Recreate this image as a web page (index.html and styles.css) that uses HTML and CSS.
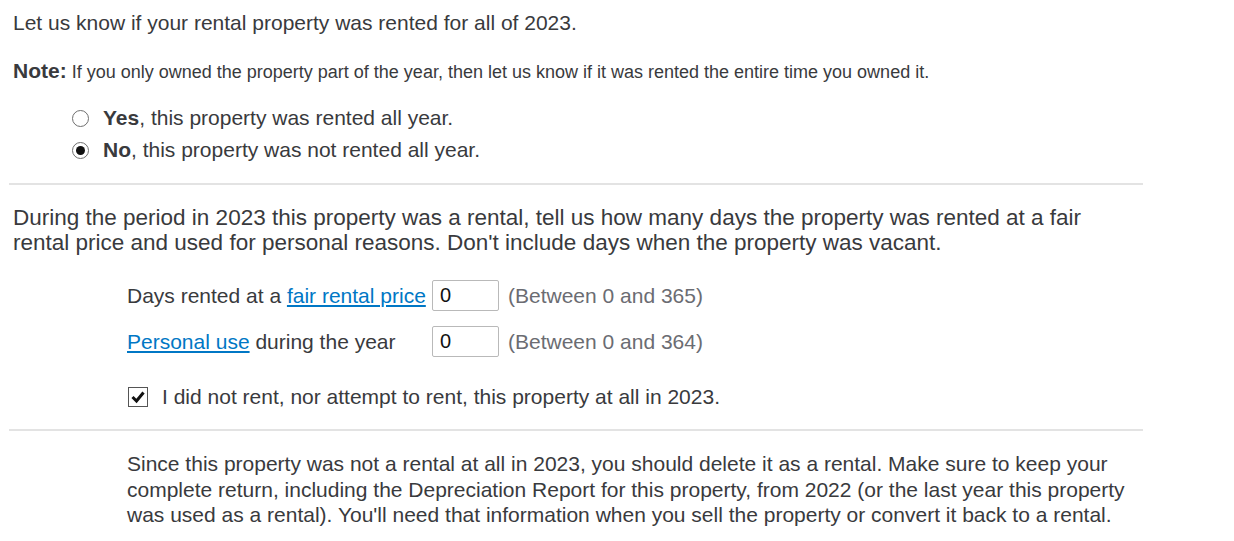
FILE: index.html
```html
<!DOCTYPE html>
<html lang="en">
<head>
<meta charset="utf-8">
<title>Rental days</title>
<link rel="stylesheet" href="styles.css">
</head>
<body>
<div class="page">
  <section class="block">
    <p class="lead">Let us know if your rental property was rented for all of 2023.</p>
    <p class="note"><strong>Note:</strong> If you only owned the property part of the year, then let us know if it was rented the entire time you owned it.</p>
    <div class="radios">
      <label class="radio-row"><span class="radio"></span><span><b>Yes</b>, this property was rented all year.</span></label>
      <label class="radio-row"><span class="radio checked"></span><span><b>No</b>, this property was not rented all year.</span></label>
    </div>
  </section>
  <hr class="rule">
  <section class="block">
    <p class="question">During the period in 2023 this property was a rental, tell us how many days the property was rented at a fair rental price and used for personal reasons. Don't include days when the property was vacant.</p>
    <div class="fields">
      <div class="field-row">
        <span class="field-label">Days rented at a <a href="#">fair rental price</a></span>
        <input class="num" type="text" value="0">
        <span class="hint">(Between 0 and 365)</span>
      </div>
      <div class="field-row">
        <span class="field-label"><a href="#">Personal use</a> during the year</span>
        <input class="num" type="text" value="0">
        <span class="hint">(Between 0 and 364)</span>
      </div>
      <label class="check-row">
        <span class="checkbox"><svg viewBox="0 0 20 20" width="20" height="20"><path d="M4.5 10 L8.5 14 L15.5 5.5" fill="none" stroke="#111" stroke-width="3"/></svg></span>
        <span>I did not rent, nor attempt to rent, this property at all in 2023.</span>
      </label>
    </div>
  </section>
  <hr class="rule rule-2">
  <section class="block">
    <p class="info">Since this property was not a rental at all in 2023, you should delete it as a rental. Make sure to keep your complete return, including the Depreciation Report for this property, from 2022 (or the last year this property was used as a rental). You'll need that information when you sell the property or convert it back to a rental.</p>
  </section>
</div>
</body>
</html>
```

FILE: styles.css
```css
* { box-sizing: border-box; }
html, body { margin: 0; padding: 0; background: #fff; }
body {
  font-family: "Liberation Sans", Arial, sans-serif;
  color: #393a3d;
}
.page {
  width: 1134px;
  margin-left: 9px;
  padding-top: 11px;
}
.block { padding-left: 4px; }
p { margin: 0; }
.lead { font-size: 21px; line-height: 24px; }
.note { font-size: 18px; line-height: 24px; margin-top: 24px; }
.note strong { font-size: 21px; }
.radios {
  margin-top: 22px;
  padding-left: 59px;
  display: flex;
  flex-direction: column;
  gap: 8px;
}
.radio-row {
  display: flex;
  align-items: center;
  gap: 14px;
  font-size: 21px;
  line-height: 24px;
}
.radio {
  width: 17px; height: 17px;
  border-radius: 50%;
  border: 1px solid #6f6f6f;
  background: #fff;
  display: inline-flex;
  align-items: center;
  justify-content: center;
}
.radio.checked::after {
  content: "";
  width: 9px; height: 9px;
  border-radius: 50%;
  background: #111;
}
.rule {
  border: 0;
  height: 2px;
  background: #e3e3e3;
  margin: 21px 0 0;
}
.question {
  font-size: 22.5px;
  line-height: 25px;
  margin-top: 20px;
}
.fields { padding-left: 114px; margin-top: 25px; }
.field-row {
  display: flex;
  align-items: center;
  font-size: 21px;
  height: 31px;
  margin-bottom: 15px;
}
.field-label { width: 305px; }
a { color: #0077c5; text-decoration: underline; }
.num {
  width: 67px; height: 31px;
  border: 1px solid #b9b9b9;
  border-radius: 2px;
  font-family: inherit;
  font-size: 20px;
  color: #111;
  padding: 0 7px;
  margin: 0;
}
.hint { color: #6b6c72; margin-left: 9px; }
.check-row {
  display: flex;
  align-items: center;
  gap: 14px;
  font-size: 21px;
  line-height: 24px;
  margin-top: 28px;
  padding-left: 1px;
}
.checkbox {
  width: 20px; height: 20px;
  border: 1px solid #555;
  display: inline-flex;
}
.checkbox svg { display: block; margin: -1px; }
.rule-2 { margin-top: 20px; }
.info {
  font-size: 21px;
  line-height: 25.5px;
  padding-left: 114px;
  margin-top: 20px;
}
```
